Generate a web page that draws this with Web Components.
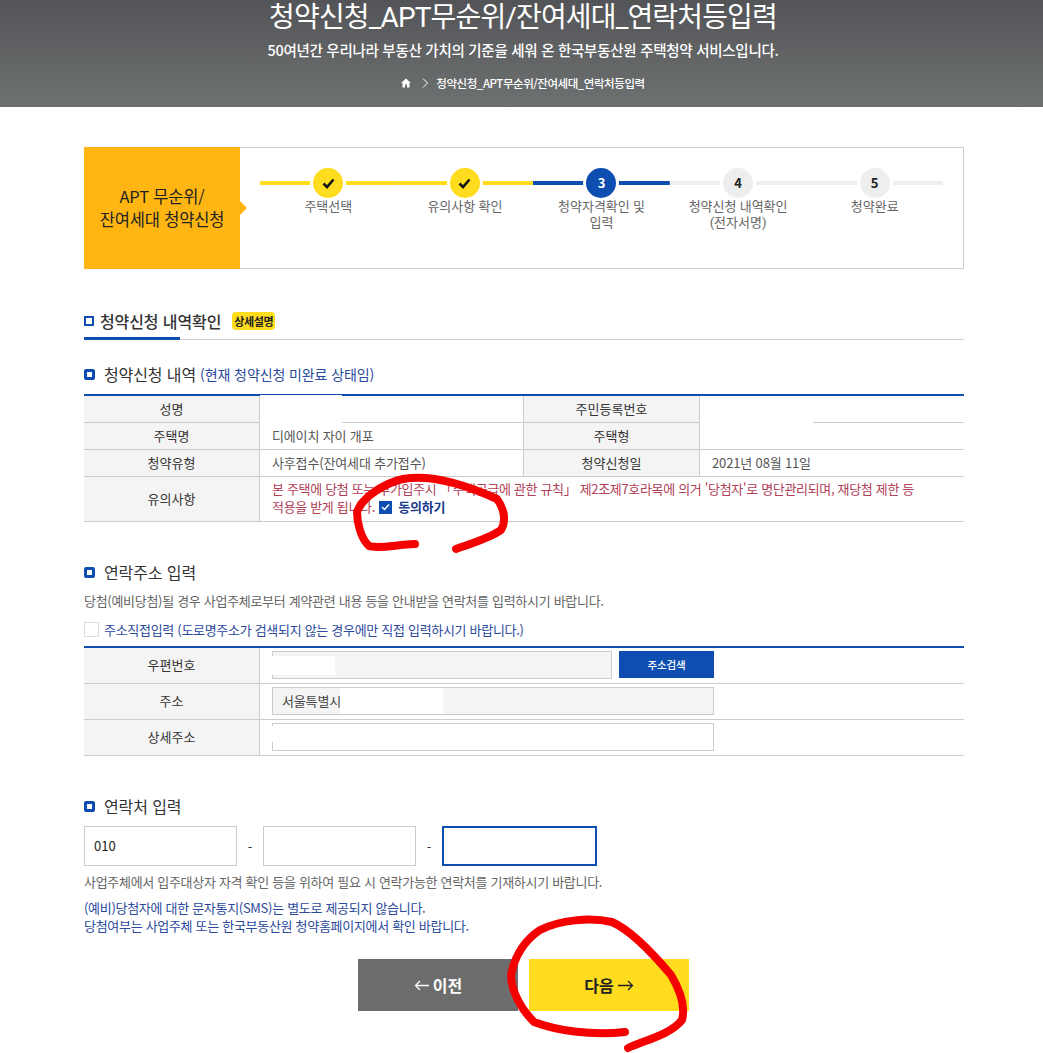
<!DOCTYPE html>
<html lang="ko">
<head>
<meta charset="utf-8">
<title>청약신청</title>
<style>
  html, body { margin: 0; background: #fff; }
  body { font-family: "Noto Sans CJK KR", "Noto Sans", sans-serif; font-size: 13px; color: #666; }
</style>
</head>
<body>
<apply-page></apply-page>

<script>
const BLUE = '#0e4eb0';

class PageHeader extends HTMLElement {
  constructor() {
    super();
    this.attachShadow({ mode: 'open' }).innerHTML = `
    <style>
      :host { display: block; box-sizing: border-box; height: 107px; padding-left: 3px; background: linear-gradient(#535457, #6e7172); color: #fff; text-align: center; overflow: hidden; }
      h1 { margin: 0; font-family: Roboto, "Noto Sans CJK KR", sans-serif; font-size: 28px; font-weight: 400; line-height: 36px; letter-spacing: -0.85px; }
      p { margin: 3px 0 0; font-size: 14.5px; font-weight: 500; line-height: 22px; letter-spacing: -0.28px; }
      nav { margin-top: 12px; display: flex; justify-content: center; align-items: center; gap: 8px; font-size: 11.5px; font-weight: 500; line-height: 20px; letter-spacing: -0.45px; }
      svg { display: block; }
    </style>
    <h1>청약신청_APT무순위/잔여세대_연락처등입력</h1>
    <p>50여년간 우리나라 부동산 가치의 기준을 세워 온 한국부동산원 주택청약 서비스입니다.</p>
    <nav>
      <svg width="10" height="10" viewBox="0 0 10 10"><path d="M5 .5 0 5h1.500v4.500h2.500V6.500h2V9.500h2.500V5H10z" fill="#fff"/></svg>
      <svg width="6" height="10" viewBox="0 0 6 10" style="margin-left:3px"><path d="M1 .5 5.500 5 1 9.500" fill="none" stroke="#fff"/></svg>
      <span>청약신청_APT무순위/잔여세대_연락처등입력</span>
    </nav>`;
  }
}
customElements.define('page-header', PageHeader);

class StepItem extends HTMLElement {
  constructor() {
    super();
    const state = this.getAttribute('state') || 'todo';
    const color = { done: '#ffdc1e', now: BLUE, todo: '#eeeeee' }[state];
    const inner = state === 'done'
      ? '<svg width="13" height="11" viewBox="0 0 13 11"><path d="M1.500 5.500 5 9 11.500 1.500" fill="none" stroke="#111" stroke-width="2.600"/></svg>'
      : this.getAttribute('num');
    this.attachShadow({ mode: 'open' }).innerHTML = `
    <style>
      :host { display: block; flex: 1 1 0; min-width: 0; text-align: center; font-size: 13px; line-height: 16px; color: #666; letter-spacing: 0; }
      .track { height: 32px; display: flex; align-items: center; justify-content: center; background: linear-gradient(${color}, ${color}) center / 100% 4px no-repeat; }
      .dot { width: 30px; height: 30px; border-radius: 50%; border: 3px solid #fff; background: ${color}; display: flex; align-items: center; justify-content: center; font-size: 13px; font-weight: 700; color: ${state === 'now' ? '#fff' : '#222'}; letter-spacing: 0; box-sizing: content-box; }
      .label { margin-top: 0; padding: 0 12px; font-family: Roboto, "Noto Sans CJK KR", sans-serif; }
    </style>
    <div class="track"><span class="dot">${inner}</span></div>
    <div class="label"><slot></slot></div>`;
  }
}
customElements.define('step-item', StepItem);

class StepBar extends HTMLElement {
  constructor() {
    super();
    this.attachShadow({ mode: 'open' }).innerHTML = `
    <style>
      :host { display: flex; height: 122px; box-sizing: border-box; border: 1px solid #ccc; border-left: 0; margin: 40px 0 0; }
      .name { position: relative; flex: 0 0 156px; background: #ffb612; color: #222; display: flex; align-items: center; justify-content: center; text-align: center; font-size: 16.500px; line-height: 23px; letter-spacing: -0.2px; margin-top: -1px; margin-bottom: -1px; }
      .name::after { content: ""; position: absolute; left: 100%; top: 50%; margin-top: -7px; border-left: 7px solid #ffb612; border-top: 7px solid transparent; border-bottom: 7px solid transparent; }
      .steps { flex: 1; display: flex; padding: 19px 20px 0 20px; }
    </style>
    <div class="name"><span>APT 무순위/<br>잔여세대 청약신청</span></div>
    <div class="steps"><slot></slot></div>`;
  }
}
customElements.define('step-bar', StepBar);

class PageTitle extends HTMLElement {
  constructor() {
    super();
    this.attachShadow({ mode: 'open' }).innerHTML = `
    <style>
      :host { display: block; margin-top: 40px; height: 30px; position: relative; border-bottom: 1px solid #ccc; box-sizing: content-box; }
      .row { display: flex; align-items: center; height: 24px; font-size: 16px; font-weight: 500; color: #333; letter-spacing: -0.1px; }
      i { width: 6px; height: 6px; border: 2px solid ${BLUE}; margin-right: 6px; background: #fff; }
      b { margin-left: 11px; background: #ffdc1e; border-radius: 4px; font-size: 11px; font-weight: 700; line-height: 18px; padding: 0 2px; color: #222; letter-spacing: -0.4px; }
      .bar { position: absolute; left: 0; bottom: -1px; width: 96px; height: 3px; background: ${BLUE}; }
    </style>
    <div class="row"><i></i><span><slot></slot></span><b>상세설명</b></div>
    <div class="bar"></div>`;
  }
}
customElements.define('page-title', PageTitle);

class SubTitle extends HTMLElement {
  constructor() {
    super();
    this.attachShadow({ mode: 'open' }).innerHTML = `
    <style>
      :host { display: flex; align-items: center; height: 22px; font-size: 16px; color: #333; letter-spacing: -0.1px; }
      i { width: 5px; height: 5px; border: 3px solid ${BLUE}; border-radius: 2px; margin-right: 9px; background: #fff; flex: none; }
      ::slotted(em) { font-style: normal; color: #2b4a9c; font-size: 14px; margin-left: 4px; letter-spacing: -0.1px; }
    </style>
    <i></i><slot></slot>`;
  }
}
customElements.define('sub-title', SubTitle);

// table shared by the two form sections
class FormTable extends HTMLElement {
  constructor() {
    super();
    this.attachShadow({ mode: 'open' }).innerHTML = `
    <style>
      :host { display: block; border-top: 2px solid ${BLUE}; }
      .grid { display: grid; grid-template-columns: var(--cols, 176px 1fr); }
    </style>
    <div class="grid"><slot></slot></div>`;
  }
}
customElements.define('form-table', FormTable);

class FormHead extends HTMLElement {
  constructor() {
    super();
    this.attachShadow({ mode: 'open' }).innerHTML = `
    <style>
      :host { display: flex; align-items: center; justify-content: center; box-sizing: border-box; background: #f4f4f4; border-bottom: 1px solid #ccc; border-right: 1px solid #ccc; padding-bottom: 2px; font-size: 13px; color: #333; min-height: var(--row, 27px); letter-spacing: 0; }
    </style>
    <slot></slot>`;
  }
}
customElements.define('form-head', FormHead);

class FormCell extends HTMLElement {
  constructor() {
    super();
    this.attachShadow({ mode: 'open' }).innerHTML = `
    <style>
      :host { display: flex; align-items: center; box-sizing: border-box; border-bottom: 1px solid #ccc; padding: 0 12px 2px; font-size: 13px; color: #555; min-height: var(--row, 27px); min-width: 0; letter-spacing: -0.15px; }
    </style>
    <slot></slot>`;
  }
}
customElements.define('form-cell', FormCell);

class TextBox extends HTMLElement {
  constructor() {
    super();
    this.attachShadow({ mode: 'open' }).innerHTML = `
    <style>
      :host { display: flex; align-items: center; box-sizing: border-box; height: 28px; border: 1px solid #ccc; padding: 0 9px; font-size: 13px; color: #444; }
      :host([off]) { background: #f4f4f4; }
      :host([wide]) { height: 40px; padding: 0 9px 2px; color: #222; }
      :host([focus]) { border: 2px solid ${BLUE}; }
    </style>
    <slot></slot>`;
  }
}
customElements.define('text-box', TextBox);

class ActionButton extends HTMLElement {
  constructor() {
    super();
    const next = this.hasAttribute('next');
    this.attachShadow({ mode: 'open' }).innerHTML = `
    <style>
      :host { display: flex; align-items: center; justify-content: center; gap: 4px; width: 160px; height: 52px; font-size: 16px; font-weight: 700; background: ${next ? '#ffdc1e' : '#6d6d6d'}; color: ${next ? '#222' : '#fff'}; }
      svg { display: block; }
    </style>
    ${next ? '' : '<svg width="15" height="11" viewBox="0 0 15 11"><path d="M15 5.500H1.500M6 1 1.500 5.500 6 10" fill="none" stroke="#fff" stroke-width="1.300"/></svg>'}
    <span><slot></slot></span>
    ${next ? '<svg width="16" height="11" viewBox="0 0 16 11"><path d="M0 5.500H14.500M10 1l4.500 4.500L10 10" fill="none" stroke="#222" stroke-width="1.300"/></svg>' : ''}`;
  }
}
customElements.define('action-button', ActionButton);

class ApplyPage extends HTMLElement {
  constructor() {
    super();
    this.attachShadow({ mode: 'open' }).innerHTML = `
    <style>
      :host { display: block; position: relative; height: 1053px; overflow: hidden; color: #666; }
      main { padding: 0 79px 0 84px; }
      .gap1 { margin-top: 23px; }
      .gap1 + form-table { margin-top: 9px; }
      .note { --row: 45px; }
      .red { color: #b04058; line-height: 18px; letter-spacing: -0.33px; }
      .agree { display: inline-flex; align-items: center; vertical-align: top; gap: 6px; color: #1a3c8c; font-weight: 700; margin-left: 1px; letter-spacing: -0.2px; }
      .agree i { width: 13px; height: 13px; background: ${BLUE}; display: flex; align-items: center; justify-content: center; }
      .txt { margin: 0; line-height: 18px; letter-spacing: -0.3px; color: #666; }
      .direct { display: flex; align-items: center; margin-top: 10px; height: 18px; color: #2b4a9c; letter-spacing: -0.3px; margin-bottom: 8px; }
      .direct i { width: 13px; height: 13px; border: 1px solid #ddd; margin-right: 5px; }
      .addr { --row: 36px; }
      .zip { display: flex; gap: 7px; align-items: center; }
      .zip text-box { width: 340px; }
      .search { width: 95px; height: 27px; background: ${BLUE}; color: #fff; font-size: 10.500px; font-weight: 500; display: flex; align-items: center; justify-content: center; }
      .phone { display: flex; align-items: center; margin-top: 9px; }
      .phone text-box { width: 153px; }
      .phone text-box[focus] { width: 155px; }
      .phone span { width: 26px; text-align: center; color: #333; }
      .blue { margin: 0; color: #2b4a9c; line-height: 18px; letter-spacing: -0.3px; }
      .btns { display: flex; justify-content: flex-start; gap: 11px; margin: 24px 0 0 274px; }
      .patch { position: absolute; background: #fff; }
      svg.ink { position: absolute; left: 0; top: 0; pointer-events: none; }
    </style>
    <page-header></page-header>
    <main>
      <step-bar>
        <step-item state="done">주택선택</step-item>
        <step-item state="done">유의사항 확인</step-item>
        <step-item state="now" num="3">청약자격확인 및<br>입력</step-item>
        <step-item num="4">청약신청 내역확인<br>(전자서명)</step-item>
        <step-item num="5">청약완료</step-item>
      </step-bar>

      <page-title>청약신청 내역확인</page-title>

      <sub-title class="gap1">청약신청 내역<em>(현재 청약신청 미완료 상태임)</em></sub-title>
      <form-table style="--cols: 176px 263px 177px 264px">
        <form-head>성명</form-head><form-cell></form-cell><form-head style="border-left:1px solid #ccc">주민등록번호</form-head><form-cell></form-cell>
        <form-head>주택명</form-head><form-cell>디에이치 자이 개포</form-cell><form-head style="border-left:1px solid #ccc">주택형</form-head><form-cell></form-cell>
        <form-head>청약유형</form-head><form-cell>사후접수(잔여세대 추가접수)</form-cell><form-head style="border-left:1px solid #ccc">청약신청일</form-head><form-cell>2021년 08월 11일</form-cell>
        <form-head class="note">유의사항</form-head>
        <form-cell class="note" style="grid-column: span 3">
          <div class="red">본 주택에 당첨 또는 추가입주시 「주택공급에 관한 규칙」 제2조제7호라목에 의거 '당첨자'로 명단관리되며, 재당첨 제한 등<br>적용을 받게 됩니다. <span class="agree"><i><svg width="9" height="8" viewBox="0 0 9 8"><path d="M1 4 3.500 6.500 8 1.500" fill="none" stroke="#fff" stroke-width="1.500"/></svg></i>동의하기</span></div>
        </form-cell>
      </form-table>

      <sub-title style="margin-top:39px">연락주소 입력</sub-title>
      <p class="txt" style="margin-top:9px">당첨(예비당첨)될 경우 사업주체로부터 계약관련 내용 등을 안내받을 연락처를 입력하시기 바랍니다.</p>
      <div class="direct"><i></i>주소직접입력 (도로명주소가 검색되지 않는 경우에만 직접 입력하시기 바랍니다.)</div>
      <form-table class="addr">
        <form-head>우편번호</form-head>
        <form-cell><div class="zip"><text-box off></text-box><div class="search">주소검색</div></div></form-cell>
        <form-head>주소</form-head>
        <form-cell><text-box off style="width:442px">서울특별시</text-box></form-cell>
        <form-head>상세주소</form-head>
        <form-cell><text-box style="width:442px"></text-box></form-cell>
      </form-table>

      <sub-title style="margin-top:39px">연락처 입력</sub-title>
      <div class="phone">
        <text-box wide>010</text-box><span>-</span>
        <text-box wide></text-box><span>-</span>
        <text-box wide focus></text-box>
      </div>
      <p class="txt" style="margin-top:7px">사업주체에서 입주대상자 자격 확인 등을 위하여 필요 시 연락가능한 연락처를 기재하시기 바랍니다.</p>
      <p class="blue" style="margin-top:8px">(예비)당첨자에 대한 문자통지(SMS)는 별도로 제공되지 않습니다.<br>당첨여부는 사업주체 또는 한국부동산원 청약홈페이지에서 확인 바랍니다.</p>
      <div class="btns">
        <action-button>이전</action-button>
        <action-button next>다음</action-button>
      </div>
    </main>

    <div class="patch" style="left:260px;top:395px;width:82px;height:28px"></div>
    <div class="patch" style="left:700px;top:418px;width:113px;height:6px"></div>
    <div class="patch" style="left:272px;top:656px;width:63px;height:19px"></div>
    <div class="patch" style="left:340px;top:688px;width:103px;height:26px"></div>
    <div class="patch" style="left:271px;top:726px;width:3px;height:16px"></div>

    <svg class="ink" width="1043" height="1053" viewBox="0 0 1043 1053" fill="none" stroke="#f40000" stroke-width="8" stroke-linecap="round" stroke-linejoin="round">
      <path d="M415 544C395 545 378 549 369 546C360 538 357 520 357 512C362 497 385 483 403 479C425 475 455 480 497 499C505 510 506 522 501 530C490 538 470 544 456 549"/>
      <path d="M625 1032C590 1036 555 1030 534 1022C520 1008 511 990 511 975C515 955 525 940 540 930C560 920 590 917 612 922C630 930 650 950 671 975C680 990 686 1005 682 1020C670 1035 645 1040 628 1048"/>
    </svg>`;
  }
}
customElements.define('apply-page', ApplyPage);
</script>
</body>
</html>
